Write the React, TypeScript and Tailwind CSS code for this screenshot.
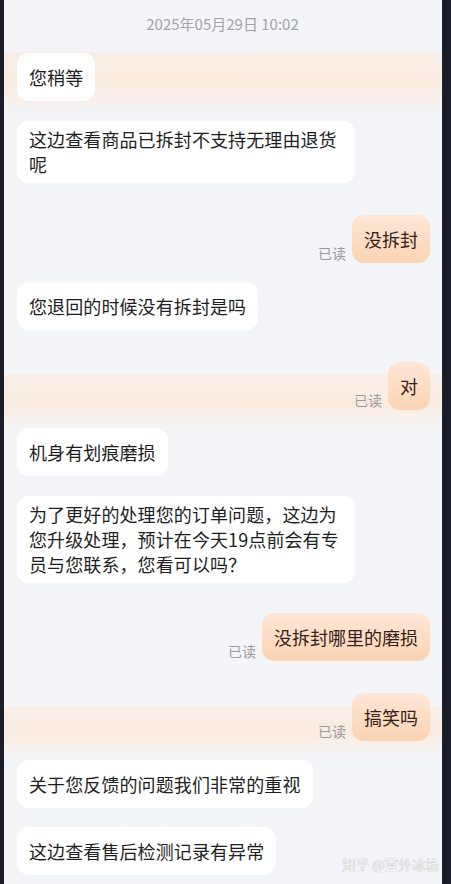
import React from "react";

const font = { fontFamily: '"Noto Sans CJK SC", "Noto Sans", sans-serif' };

function Left({ text, mt }: { text: string; mt: string }) {
  return (
    <div className={`flex justify-start pl-[13px] ${mt}`}>
      <div className="max-w-[338px] min-h-[48px] flex items-center rounded-[12px] bg-white px-[12px] py-[6px] text-[18px] leading-[25px] text-[#1e1e1e] tracking-[0.1px]">
        <span>{text}</span>
      </div>
    </div>
  );
}

function Right({ text, mt }: { text: string; mt: string }) {
  return (
    <div className={`flex justify-end items-end gap-[6px] pr-[11px] ${mt}`}>
      <span className="text-[14px] leading-[18px] text-[#9b9b9f] mb-[1px]">已读</span>
      <div className="min-h-[48px] flex items-center rounded-[12px] bg-gradient-to-b from-[#fde7d5] to-[#fbd3b4] px-[12px] py-[6px] text-[18px] leading-[25px] text-[#33221a]">
        <span>{text}</span>
      </div>
    </div>
  );
}

export default function App() {
  return (
    <div className="w-[451px] h-[884px] bg-[#1b1d2b] flex overflow-hidden" style={font}>
      <div className="relative ml-[4px] w-[438px] h-full bg-[#f4f5f9] border-r border-[#fbfbfd]">
        <div className="pointer-events-none absolute left-0 right-0 top-[52px] h-[62px] bg-gradient-to-b from-[#f8efe9] via-[#faebdf] to-transparent" />
        <div className="pointer-events-none absolute left-0 right-0 top-[374px] h-[58px] bg-gradient-to-b from-[#f8efe9] via-[#faebdf] to-transparent" />
        <div className="pointer-events-none absolute left-0 right-0 top-[706px] h-[52px] bg-gradient-to-b from-[#f8efe9] via-[#faebdf] to-transparent" />
        <div className="relative">
          <div className="pt-[14px] h-[34px] text-center text-[15px] leading-[20px] text-[#a2a2a7]">
            2025年05月29日 10:02
          </div>
          <Left text="您稍等" mt="mt-[19px]" />
          <Left text="这边查看商品已拆封不支持无理由退货呢" mt="mt-[20px]" />
          <Right text="没拆封" mt="mt-[32px]" />
          <Left text="您退回的时候没有拆封是吗" mt="mt-[19px]" />
          <Right text="对" mt="mt-[32px]" />
          <Left text="机身有划痕磨损" mt="mt-[18px]" />
          <Left text="为了更好的处理您的订单问题，这边为您升级处理，预计在今天19点前会有专员与您联系，您看可以吗？" mt="mt-[20px]" />
          <Right text="没拆封哪里的磨损" mt="mt-[30px]" />
          <Right text="搞笑吗" mt="mt-[32px]" />
          <Left text="关于您反馈的问题我们非常的重视" mt="mt-[19px]" />
          <Left text="这边查看售后检测记录有异常" mt="mt-[19px]" />
        </div>
        <div className="absolute right-[2px] bottom-[12px] text-[13.5px] leading-[16px] text-white/90 [text-shadow:0_0_1px_rgba(0,0,0,0.45)]">
          知乎 @室外冰箱
        </div>
      </div>
    </div>
  );
}
